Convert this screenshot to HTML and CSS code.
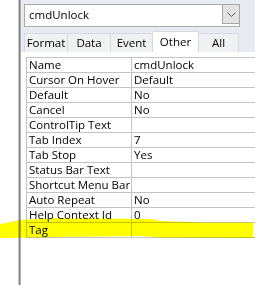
FILE: index.html
```html
<!DOCTYPE html>
<html>
<head>
<meta charset="utf-8">
<link rel="stylesheet" href="styles.css">
</head>
<body>
<div class="app">
  <div class="side"></div>
  <div class="sep"></div>
  <div class="sheet">
    <div class="head">
      <div class="combo">
        <div class="combo-text">cmdUnlock</div>
        <div class="combo-btn">
          <svg width="9" height="5" viewBox="0 0 9 5"><path d="M0.5 0.5 L4.5 4.5 L8.5 0.5" fill="none" stroke="#5a5a5a" stroke-width="1"/></svg>
        </div>
      </div>
      <div class="tabs">
        <div class="tab t-format">Format</div>
        <div class="tab t-data">Data</div>
        <div class="tab t-event">Event</div>
        <div class="tab t-other active">Other</div>
        <div class="tab t-all">All</div>
      </div>
    </div>
    <div class="page">
      <div class="grid">
        <div class="row"><div class="k">Name</div><div class="v">cmdUnlock</div></div>
        <div class="row"><div class="k">Cursor On Hover</div><div class="v">Default</div></div>
        <div class="row"><div class="k">Default</div><div class="v">No</div></div>
        <div class="row"><div class="k">Cancel</div><div class="v">No</div></div>
        <div class="row"><div class="k">ControlTip Text</div><div class="v"></div></div>
        <div class="row"><div class="k">Tab Index</div><div class="v">7</div></div>
        <div class="row"><div class="k">Tab Stop</div><div class="v">Yes</div></div>
        <div class="row"><div class="k">Status Bar Text</div><div class="v"></div></div>
        <div class="row"><div class="k">Shortcut Menu Bar</div><div class="v"></div></div>
        <div class="row"><div class="k">Auto Repeat</div><div class="v">No</div></div>
        <div class="row"><div class="k">Help Context Id</div><div class="v">0</div></div>
        <div class="row"><div class="k">Tag</div><div class="v"></div></div>
      </div>
    </div>
  </div>
  <div class="highlight"></div>
</div>
</body>
</html>
```

FILE: styles.css
```css
* { box-sizing: border-box; }
html, body { margin: 0; padding: 0; background: #fff; }
body {
  width: 255px;
  height: 285px;
  overflow: hidden;
  font-family: "Open Sans", "Noto Sans", sans-serif;
  font-size: 11px;
  color: #000;
}
.app {
  position: relative;
  display: flex;
  width: 255px;
  height: 285px;
}
.side { width: 18px; background: #fff; }
.sep {
  width: 3px;
  background: #7f858f;
  border-left: 1px solid #c8c8c8;
  border-right: 1px solid #aab0b8;
}
.sheet {
  flex: 1;
  display: flex;
  flex-direction: column;
  min-width: 0;
}
.head {
  background: #e8ebf1;
  padding: 4px 0 0 3px;
}
.combo {
  width: 216px;
  height: 23px;
  border: 1px solid #ababab;
  background: #fff;
  display: flex;
  align-items: flex-start;
}
.combo-text {
  flex: 1;
  padding: 2px 0 0 4px;
  line-height: 16px;
  font-size: 11.5px;
}
.combo-btn {
  width: 18px;
  height: 20px;
  margin-top: -1px;
  margin-right: -1px;
  border: 1px solid #a6a6a6;
  background: #e3e3e3;
  display: flex;
  align-items: center;
  justify-content: center;
}
.tabs {
  display: flex;
  align-items: flex-end;
  margin-top: 4px;
  height: 21px;
}
.tab {
  height: 19px;
  border: 1px solid #d6d9de;
  border-bottom: none;
  background: #f0f1f3;
  text-align: center;
  line-height: 17px;
  font-size: 11.5px;
}
.tab + .tab { border-left: none; }
.t-format { width: 44px; }
.t-data { width: 43px; }
.t-event { width: 42px; }
.t-other { width: 46px; }
.t-all { width: 40px; }
.tab.active {
  height: 21px;
  background: #fff;
  border-color: #d6d9de;
  line-height: 19px;
}
.page {
  flex: 1;
  background: #fff;
  padding: 5px 0 0 5px;
}
.grid {
  border-top: 1px solid #c4c4c4;
  border-left: 1px solid #c4c4c4;
  width: 240px;
}
.row {
  display: flex;
  height: 15px;
  border-bottom: 1px solid #c4c4c4;
}
.k {
  width: 105px;
  border-right: 1px solid #c4c4c4;
  padding-left: 2px;
  line-height: 14px;
  white-space: nowrap;
  font-size: 11.5px;
}
.v {
  flex: 1;
  padding-left: 2px;
  line-height: 14px;
  white-space: nowrap;
  font-size: 11.5px;
}
.highlight {
  position: absolute;
  left: 0;
  top: 217px;
  width: 255px;
  height: 23px;
  background: #ffff00;
  mix-blend-mode: multiply;
  clip-path: polygon(0px 7px, 20px 3px, 60px 1px, 150px 2px, 160px 4px, 200px 5.5px, 253px 5.5px, 253px 21px, 160px 20.5px, 140px 19px, 60px 20px, 0px 21px);
}
```
